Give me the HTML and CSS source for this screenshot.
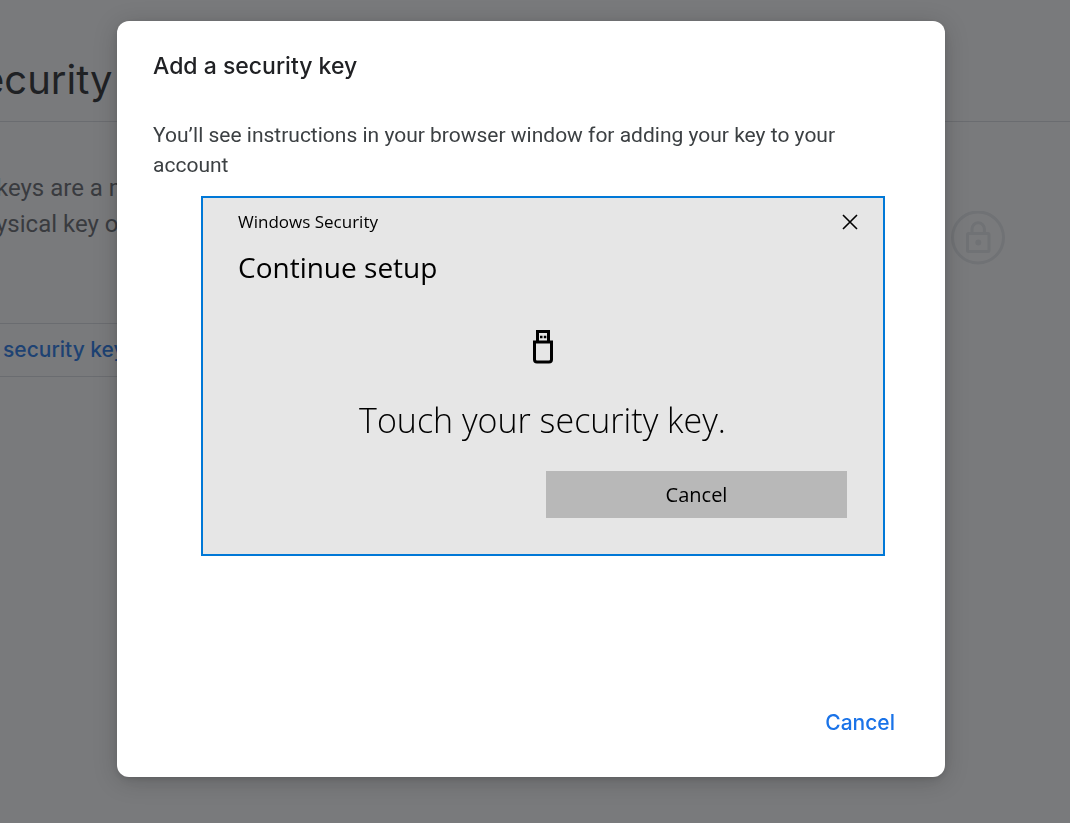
FILE: index.html
```
<!DOCTYPE html>
<html lang="en">
<head>
    <meta charset="UTF-8">
    <meta name="viewport" content="width=device-width, initial-scale=1">
    <title>Security key</title>
    <link rel="stylesheet" href="styles.css">
</head>
<body>
<main class="page">
    <h1 class="page-title">ecurity</h1>
    <section class="intro">
        <p class="intro-text">keys are a m<br>ysical key o</p>
        <svg class="lock" viewBox="0 0 54 54" fill="none" stroke="currentColor" stroke-width="3" aria-hidden="true">
            <circle cx="27" cy="26.500" r="25.5"/>
            <rect x="16.5" y="22.500" width="21.500" height="18" rx="1"/>
            <path d="M21 22v-4a6.200 6.200 0 0 1 12.400 0V22"/>
            <circle cx="27.300" cy="31.500" r="3" fill="currentColor" stroke="none"/>
        </svg>
    </section>
    <div class="add-row"><a href="#">security key</a></div>
</main>

<div class="overlay">
    <div class="dialog" role="dialog" aria-modal="true" aria-labelledby="dialogTitle">
        <h2 class="dialog-title" id="dialogTitle">Add a security key</h2>
        <p class="dialog-text">You’ll see instructions in your browser window for adding your key to your account</p>
        <div class="win">
            <div class="win-head">
                <span>Windows Security</span>
                <button class="win-close" type="button" aria-label="Close">
                    <svg viewBox="0 0 16 16" width="16" height="16" fill="none" stroke="#000" stroke-width="1.6"><path d="M1 1l14 14M15 1L1 15"/></svg>
                </button>
            </div>
            <h3 class="win-title">Continue setup</h3>
            <svg class="usb" viewBox="0 0 20 34" width="20" height="34" fill="none" stroke="#000" stroke-width="3" aria-hidden="true">
                <path d="M4.500 12V1.500h11V12"/>
                <path d="M1.500 12h17v17.500a2.500 2.500 0 0 1-2.500 2.500H4a2.500 2.500 0 0 1-2.500-2.500z"/>
                <path d="M7 7h2.500M10.800 7h2.500" stroke-width="2.500"/>
            </svg>
            <p class="win-message">Touch your security key.</p>
            <button class="win-cancel" type="button">Cancel</button>
        </div>
        <div class="dialog-actions">
            <button class="cancel" type="button">Cancel</button>
        </div>
    </div>
</div>
</body>
</html>
```
FILE: styles.css
```
*{
    margin: 0;
    padding: 0;
    box-sizing: border-box;
}
body{
    min-height: 100vh;
    background: #fff;
    color: #202124;
    font-family: Roboto, "Liberation Sans", sans-serif;
    overflow: hidden;
}
button{
    border: none;
    background: none;
    cursor: pointer;
}
svg{
    display: block;
}

/* page behind the dialog */
.page{
    overflow: hidden;
}
.page-title{
    padding: 52px 0 13px;
    margin-left: -19px;
    font: 400 40px/56px Inter, sans-serif;
    white-space: nowrap;
}
.intro{
    display: flex;
    justify-content: space-between;
    align-items: flex-start;
    height: 202px;
    padding: 48px 65px 0 0;
    border-top: 1px solid #dadce0;
}
.intro-text{
    margin-left: -4px;
    font-size: 24px;
    line-height: 36px;
    color: #5f6368;
}
.lock{
    width: 54px;
    height: 54px;
    margin-top: 41px;
    color: #e8eaed;
}
.add-row{
    width: 50%;
    padding-left: 3px;
    border-top: 1px solid #dadce0;
    border-bottom: 1px solid #dadce0;
    font: 500 21px/52px Inter, sans-serif;
    white-space: nowrap;
}
.add-row a{
    color: #1a73e8;
    text-decoration: none;
}

/* dialog */
.overlay{
    position: fixed;
    inset: 0;
    display: flex;
    padding: 21px 125px 46px 117px;
    background: rgba(32, 33, 36, 0.6);
}
.dialog{
    flex: 1;
    display: flex;
    flex-direction: column;
    padding: 28px 36px;
    border-radius: 12px;
    background: #fff;
    box-shadow: 0 2px 4px rgba(0, 0, 0, 0.1), 0 4px 24px rgba(0, 0, 0, 0.2);
}
.dialog-title{
    font: 500 23px/34px Inter, sans-serif;
}
.dialog-text{
    margin: 37px 0 16px;
    font-size: 21px;
    line-height: 30px;
    color: #3c4043;
}
.win{
    display: flex;
    flex-direction: column;
    margin: 0 24px 0 48px;
    padding: 12px 36px 36px 35px;
    border: 2px solid #0078d7;
    background: #e6e6e6;
    color: #000;
    font-family: "Open Sans", "Noto Sans", sans-serif;
}
.win-head{
    display: flex;
    justify-content: space-between;
    align-items: center;
    font-size: 17px;
    line-height: 24px;
}
.win-close{
    padding: 4px;
    margin-right: -15px;
}
.win-title{
    margin-top: 13px;
    font-size: 28px;
    font-weight: 400;
    line-height: 40px;
}
.usb{
    align-self: center;
    margin-top: 43px;
}
.win-message{
    margin: 30px 0 25px;
    font-size: 34px;
    font-weight: 300;
    line-height: 52px;
    text-align: center;
}
.win-cancel{
    align-self: flex-end;
    width: 301px;
    max-width: 100%;
    height: 47px;
    background: #b8b8b8;
    font: 400 20px/47px "Open Sans", "Noto Sans", sans-serif;
}
.dialog-actions{
    display: flex;
    justify-content: flex-end;
    margin-top: auto;
}
.cancel{
    padding: 8px 14px;
    color: #1a73e8;
    font: 500 21px/36px Inter, sans-serif;
}
```
